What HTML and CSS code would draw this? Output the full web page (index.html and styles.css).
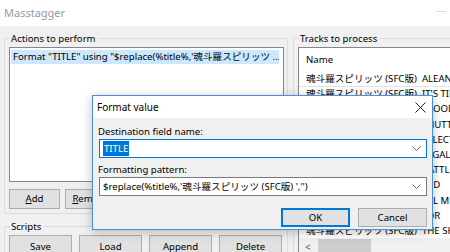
FILE: index.html
```html
<!DOCTYPE html>
<html>
<head>
<meta charset="utf-8">
<link rel="stylesheet" href="styles.css">
</head>
<body>
<div class="window">
  <div class="titlebar">
    <span class="app-title">Masstagger</span>
    <span class="min-btn"></span>
  </div>
  <div class="client">
    <div class="left-col">
      <div class="group actions">
        <div class="legend">Actions to perform</div>
        <div class="listbox">
          <div class="item selected">Format "TITLE" using "$replace(%title%,'魂斗羅スピリッツ ...</div>
        </div>
        <div class="btn-row">
          <button class="btn btn-small"><u>A</u>dd</button>
          <button class="btn btn-small"><u>R</u>emove</button>
        </div>
      </div>
      <div class="group scripts">
        <div class="legend">Scripts</div>
        <div class="btn-row scripts-row">
          <button class="btn btn-script">Save</button>
          <button class="btn btn-script">Load</button>
          <button class="btn btn-script">Append</button>
          <button class="btn btn-script">Delete</button>
        </div>
      </div>
    </div>
    <div class="group tracks">
      <div class="legend">Tracks to process</div>
      <div class="listview">
        <div class="lv-header">Name</div>
        <div class="lv-rows">
          <div class="lv-row">魂斗羅スピリッツ (SFC版)&nbsp;&nbsp;ALEAN</div>
          <div class="lv-row hover">魂斗羅スピリッツ (SFC版)&nbsp;&nbsp;IT'S TIME</div>
          <div class="lv-row">魂斗羅スピリッツ (SFC版)&nbsp;&nbsp;BLOODY</div>
          <div class="lv-row">魂斗羅スピリッツ (SFC版)&nbsp;&nbsp;SHUTTER</div>
          <div class="lv-row">魂斗羅スピリッツ (SFC版)&nbsp;&nbsp;SELECT</div>
          <div class="lv-row">魂斗羅スピリッツ (SFC版)&nbsp;&nbsp;LEGAL</div>
          <div class="lv-row">魂斗羅スピリッツ (SFC版)&nbsp;&nbsp;BATTLE</div>
          <div class="lv-row">魂斗羅スピリッツ (SFC版)&nbsp;&nbsp;RED</div>
          <div class="lv-row">魂斗羅スピリッツ (SFC版)&nbsp;&nbsp;ALL M</div>
          <div class="lv-row">魂斗羅スピリッツ (SFC版)&nbsp;&nbsp;FOR</div>
          <div class="lv-row">魂斗羅スピリッツ (SFC版)&nbsp;&nbsp;THE SHOW</div>
        </div>
        <div class="hscroll">
          <span class="arrow">&lt;</span>
          <span class="thumb"></span>
        </div>
      </div>
    </div>
  </div>

  <div class="dialog">
    <div class="dlg-title">
      <span>Format value</span>
      <svg class="close" width="11" height="11" viewBox="0 0 11 11"><path d="M0.5 0.5 L10.5 10.5 M10.5 0.5 L0.5 10.5" stroke="#222" stroke-width="1" fill="none"/></svg>
    </div>
    <div class="dlg-body">
      <div class="field-label">Destination field name:</div>
      <div class="combo focused">
        <span class="combo-text"><span class="sel">TITLE</span></span>
        <svg class="chev" width="9" height="6" viewBox="0 0 9 6"><path d="M0.5 0.5 L4.5 4.5 L8.5 0.5" stroke="#666" fill="none"/></svg>
      </div>
      <div class="field-label second">Formatting pattern:</div>
      <div class="combo">
        <span class="combo-text">$replace(%title%,'魂斗羅スピリッツ (SFC版) ','')</span>
        <svg class="chev" width="9" height="6" viewBox="0 0 9 6"><path d="M0.5 0.5 L4.5 4.5 L8.5 0.5" stroke="#666" fill="none"/></svg>
      </div>
      <div class="dlg-buttons">
        <button class="btn btn-dlg default">OK</button>
        <button class="btn btn-dlg">Cancel</button>
      </div>
    </div>
  </div>
</div>
</body>
</html>
```

FILE: styles.css
```css
* { box-sizing: border-box; }

html, body {
  margin: 0;
  padding: 0;
}

body {
  width: 450px;
  height: 252px;
  overflow: hidden;
  font-family: "Noto Sans", "Noto Sans CJK JP", sans-serif;
  font-size: 9.6px;
  color: #000;
  background: #f0f0f0;
}

.window {
  position: relative;
  width: 450px;
  height: 252px;
  overflow: hidden;
  display: flex;
  flex-direction: column;
}

.titlebar {
  height: 26px;
  flex: none;
  background: #fff;
  display: flex;
  align-items: center;
  justify-content: space-between;
  padding: 0 4px 2px 4px;
}

.app-title {
  color: #999;
  font-size: 11px;
}

.min-btn {
  width: 10px;
  height: 1px;
  background: #dadada;
  margin-top: -2px;
}

.client {
  flex: 1;
  display: grid;
  grid-template-columns: 284px 200px;
  column-gap: 5px;
  padding: 12px 0 0 4px;
  background: #f0f0f0;
}

.left-col {
  display: flex;
  flex-direction: column;
  gap: 12px;
}

.group {
  border: 1px solid #dcdcdc;
  display: flex;
  flex-direction: column;
  padding: 0 3px 0 4px;
}

.legend {
  align-self: flex-start;
  margin: -8px 0 0 1px;
  padding: 0 2px 0 1px;
  height: 15px;
  line-height: 15px;
  background: #f0f0f0;
}

.actions {
  height: 176px;
  padding-bottom: 4px;
}

.listbox {
  margin-top: 1px;
  height: 135px;
  background: #fff;
  border: 1px solid #828790;
  padding: 2px 4px 0 1px;
}

.item {
  height: 14px;
  line-height: 14px;
  padding-left: 2px;
  white-space: nowrap;
  overflow: hidden;
}

.item.selected {
  background: #cce8ff;
}

.btn-row {
  display: flex;
  gap: 5px;
  margin-top: 7px;
}

.btn {
  font-family: inherit;
  font-size: inherit;
  color: #000;
  background: #e1e1e1;
  border: 1px solid #adadad;
  padding: 0;
  margin: 0;
  display: flex;
  align-items: center;
  justify-content: center;
  line-height: 14px;
}

.btn-small {
  width: 51px;
  height: 20px;
}

.btn u {
  text-decoration: underline;
  text-underline-offset: 1px;
}

.scripts {
  flex: 1;
}

.scripts-row {
  margin-top: 1px;
  gap: 7px;
}

.btn-script {
  width: 63px;
  height: 23px;
}

.tracks {
  padding-right: 0;
}

.listview {
  margin-top: 1px;
  background: #fff;
  border: 1px solid #828790;
  border-right: none;
  height: 210px;
  display: flex;
  flex-direction: column;
  overflow: hidden;
}

.lv-header {
  height: 23px;
  flex: none;
  line-height: 23px;
  padding-left: 7px;
  white-space: nowrap;
}

.lv-rows {
  flex: none;
}

.lv-row {
  height: 15.2px;
  line-height: 15px;
  padding-left: 7px;
  white-space: nowrap;
}

.lv-row.hover {
  box-shadow: inset 0 1px 0 #e3e3e3;
}

.hscroll {
  margin-top: auto;
  height: 17px;
  flex: none;
  background: #f0f0f0;
  display: flex;
  align-items: center;
  padding-left: 6px;
  gap: 7px;
  margin-bottom: 3px;
}

.arrow {
  font-size: 10px;
  color: #606060;
  width: 6px;
}

.thumb {
  width: 53px;
  height: 15px;
  background: #cdcdcd;
}

/* Dialog window */
.dialog {
  position: absolute;
  left: 92px;
  top: 95px;
  width: 341px;
  height: 135px;
  border: 1px solid #4a90d9;
  background: #f0f0f0;
  box-shadow: 0 2px 10px rgba(0, 0, 0, 0.25);
  display: flex;
  flex-direction: column;
}

.dlg-title {
  height: 22px;
  flex: none;
  background: #fff;
  display: flex;
  align-items: center;
  justify-content: space-between;
  padding: 0 6px 0 4px;
  font-size: 10px;
}

.close {
  display: block;
}

.dlg-body {
  flex: 1;
  display: flex;
  flex-direction: column;
  padding: 6px 5px 0 5px;
}

.field-label {
  height: 15px;
  line-height: 15px;
  white-space: nowrap;
}

.field-label.second {
  margin-top: 4px;
}

.combo {
  height: 19px;
  margin-left: 1px;
  background: #fff;
  border: 1px solid #7a7a7a;
  display: flex;
  align-items: center;
  justify-content: space-between;
  padding: 0 5px 0 3px;
  white-space: nowrap;
}

.combo.focused {
  border-color: #0078d7;
}

.combo-text {
  line-height: 15px;
  overflow: hidden;
}

.sel {
  background: #0078d7;
  color: #fff;
  padding: 1px 1px;
}

.chev {
  flex: none;
  display: block;
}

.dlg-buttons {
  display: flex;
  justify-content: flex-end;
  gap: 8px;
  margin-top: 12px;
}

.btn-dlg {
  width: 69px;
  height: 19px;
}

.btn-dlg.default {
  border: 2px solid #0078d7;
}
```
